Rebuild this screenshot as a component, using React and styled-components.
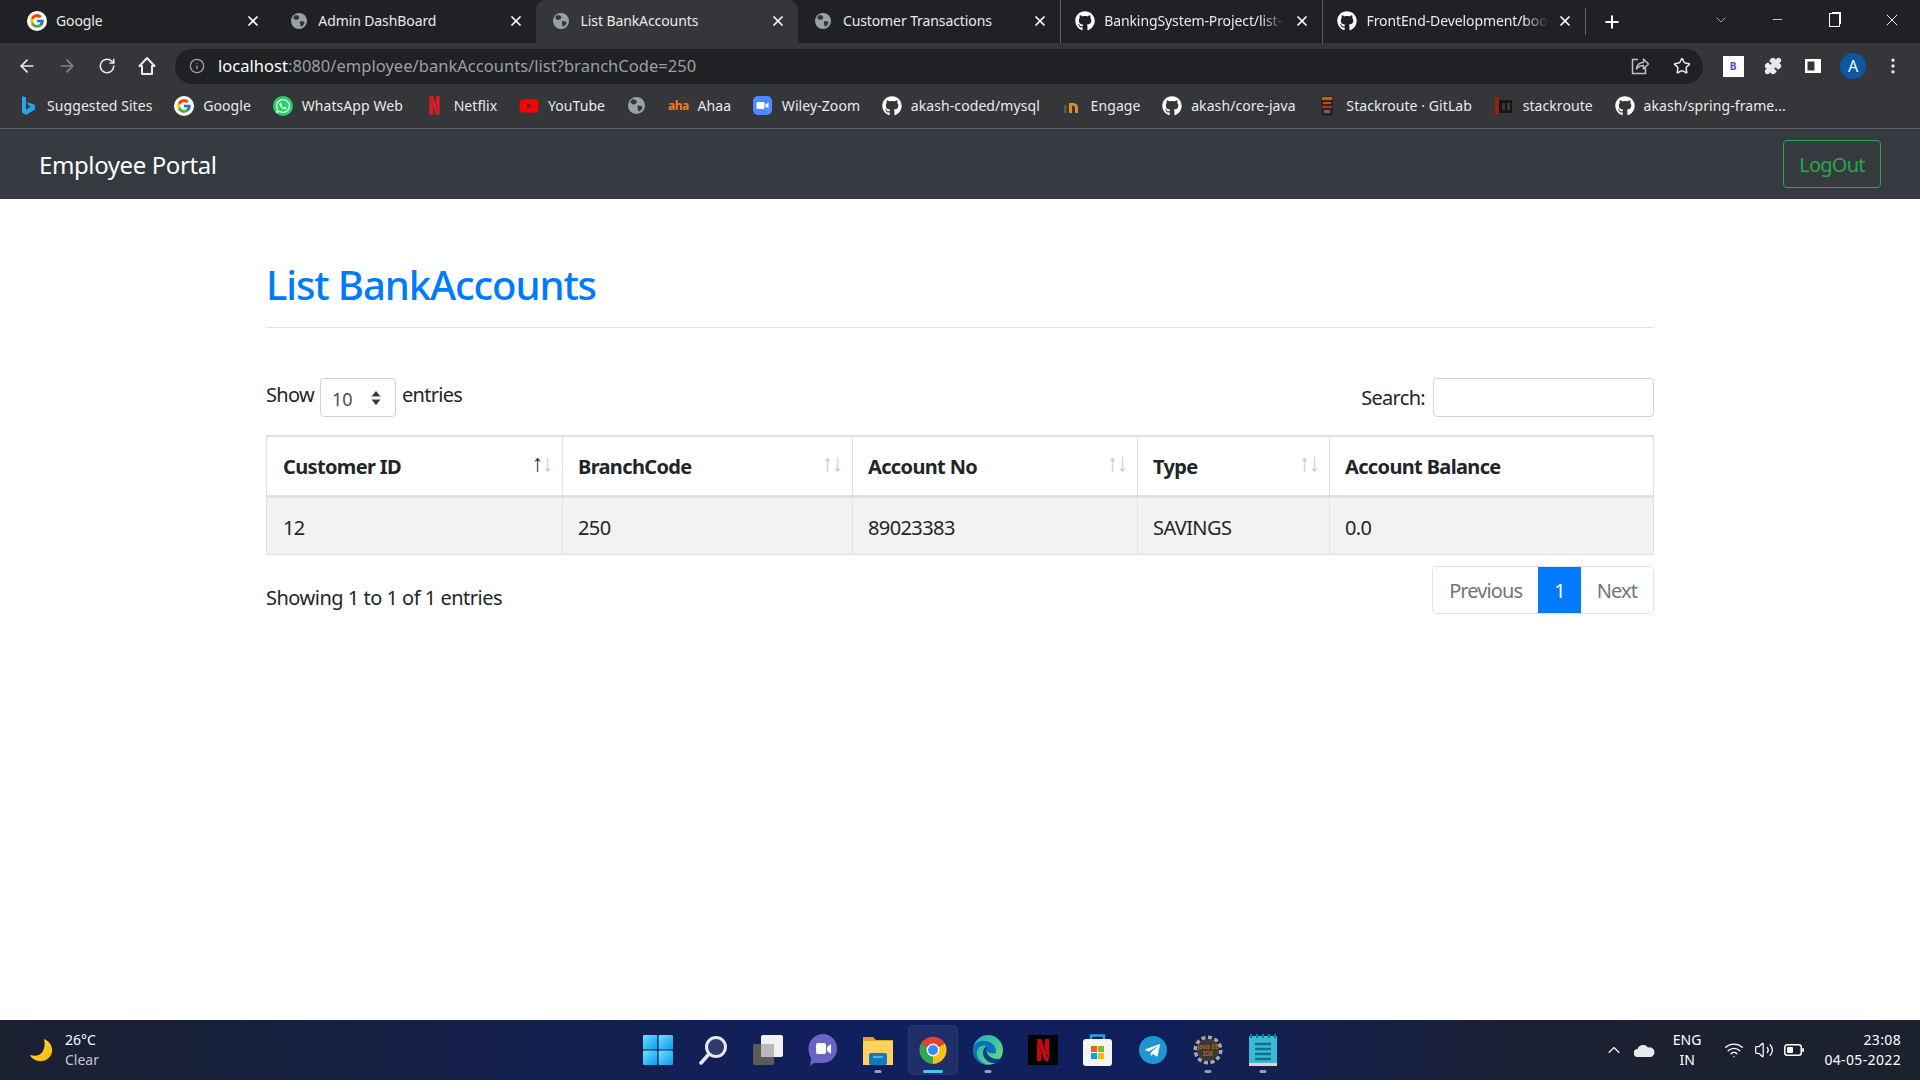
import React from 'react';
import styled, { createGlobalStyle } from 'styled-components';
import {
  ArrowLeft, ArrowRight, RotateCw, Info, Star, Puzzle, MoreVertical, X, Plus,
  ChevronDown, ChevronUp, Minus, Wifi, Volume2,
} from 'lucide-react';
import { FcGoogle } from 'react-icons/fc';
import { FaGithub, FaWhatsapp, FaTelegramPlane, FaYoutube } from 'react-icons/fa';
import { SiNetflix } from 'react-icons/si';

const GlobalStyle = createGlobalStyle`
  * { box-sizing: border-box; }
  html, body { margin: 0; height: 100%; }
  body {
    font-family: "Noto Sans", "Open Sans", sans-serif;
    background: #fff;
    color: #212529;
  }
`;

/* ---- chrome ---- */

const Screen = styled.div`
  display: flex;
  flex-direction: column;
  width: 1920px;
  height: 1080px;
  overflow: hidden;
`;

const TabStrip = styled.div`
  display: flex;
  height: 43px;
  padding-left: 11px;
  background: #202124;
`;

const Tab = styled.div`
  display: flex;
  align-items: center;
  flex: none;
  width: 262.3px;
  padding: 0 12px 2px ${(p) => (p.$divider ? '13px' : '14px')};
  color: #e8eaed;
  font-size: 14px;
  background: ${(p) => (p.$active ? '#35363a' : 'transparent')};
  border-radius: ${(p) => (p.$active ? '10px 10px 0 0' : '0')};
  border-left: 1px solid ${(p) => (p.$divider ? '#5f6368' : 'transparent')};
`;

const Favicon = styled.span`
  display: flex;
  justify-content: center;
  width: 21px;
  margin-right: 9px;
`;

const TabTitle = styled.span`
  flex: 1;
  min-width: 0;
  overflow: hidden;
  white-space: nowrap;
  letter-spacing: -0.1px;
  margin-right: 8px;
  ${(p) => p.$fade && 'mask-image: linear-gradient(to right, #000 86%, transparent);'}
`;

const NewTab = styled.div`
  display: flex;
  align-items: center;
  justify-content: center;
  width: 54px;
  border-left: 1px solid #5f6368;
  margin: 8px 0;
`;

const WindowControls = styled.div`
  display: flex;
  margin-left: auto;
`;

const WindowButton = styled.div`
  display: flex;
  align-items: center;
  justify-content: center;
  width: 57px;
  padding-bottom: 4px;
`;

const MaxGlyph = styled.span`
  width: 11px;
  height: 14px;
  border: 1.2px solid #fff;
  box-shadow: 2px -2px 0 -1px #fff;
`;

const Toolbar = styled.div`
  display: flex;
  align-items: center;
  height: 41px;
  padding: 5px 7px 0;
  background: #35363a;
`;

const ToolButton = styled.div`
  display: flex;
  align-items: center;
  justify-content: center;
  flex: none;
  width: 40px;
`;

const Omnibox = styled.div`
  display: flex;
  align-items: center;
  flex: 1;
  height: 35px;
  margin: 0 10px 0 8px;
  padding-left: 14px;
  border-radius: 18px;
  background: #202124;
`;

const Url = styled.div`
  flex: 1;
  margin-left: 13px;
  padding-bottom: 2px;
  font-size: 16.5px;
  letter-spacing: 0.03px;
  color: #9aa0a6;
  b { color: #fff; font-weight: 400; }
`;

const OmniAction = styled.div`
  display: flex;
  justify-content: center;
  width: 42px;
`;

const ExtensionB = styled.span`
  display: flex;
  align-items: center;
  justify-content: center;
  width: 21px;
  height: 21px;
  background: #fff;
  color: #4b4bd6;
  font-size: 10px;
  font-weight: 700;
`;

const Avatar = styled.span`
  display: flex;
  align-items: center;
  justify-content: center;
  width: 26px;
  height: 26px;
  border-radius: 50%;
  background: #0b57a4;
  color: #fff;
  font-size: 16px;
`;

const BookmarkBar = styled.div`
  display: flex;
  align-items: center;
  gap: 21.7px;
  height: 45px;
  padding: 0 0 1px 18px;
  background: #35363a;
  border-bottom: 1px solid #5f6368;
`;

const Bookmark = styled.div`
  display: flex;
  align-items: center;
  gap: 9px;
`;

const BookmarkIcon = styled.span`
  display: flex;
  align-items: center;
  justify-content: center;
  width: 20px;
  height: 20px;
`;

const BookmarkLabel = styled.span`
  color: #e8eaed;
  font-size: 14px;
  letter-spacing: 0.08px;
  white-space: nowrap;
`;

const WhiteDisc = styled.span`
  display: flex;
  align-items: center;
  justify-content: center;
  width: 20px;
  height: 20px;
  border-radius: 50%;
  background: #fff;
`;

const WhatsDisc = styled.span`
  display: flex;
  align-items: center;
  justify-content: center;
  width: 20px;
  height: 20px;
  border-radius: 50%;
  background: #25d366;
`;

const AhaMark = styled.span`
  color: #f47c20;
  font-size: 12px;
  font-weight: 700;
  letter-spacing: -0.5px;
`;

/* ---- employee portal ---- */

const Navbar = styled.div`
  display: flex;
  align-items: center;
  justify-content: space-between;
  flex: none;
  height: 70px;
  padding: 0 39px 0 39px;
  background: #343a40;
`;

const Brand = styled.div`
  color: #fff;
  font-size: 24px;
  letter-spacing: -0.4px;
`;

const LogoutButton = styled.button`
  width: 98px;
  height: 48px;
  background: transparent;
  border: 1px solid #28a745;
  border-radius: 4px;
  color: #28a745;
  font: inherit;
  font-size: 20px;
  letter-spacing: -0.8px;
`;

const Main = styled.main`
  flex: 1;
  padding-top: 56px;
`;

const Container = styled.div`
  width: 1388px;
  margin: 0 auto;
`;

const Heading = styled.h1`
  margin: 0;
  font-size: 40px;
  font-weight: 500;
  line-height: 60px;
  letter-spacing: -1.1px;
  color: #007bff;
`;

const Rule = styled.hr`
  margin: 12px 0 50px;
  border: 0;
  border-top: 1px solid #e3e3e3;
`;

const Controls = styled.div`
  display: flex;
  align-items: center;
  justify-content: space-between;
  height: 39px;
  margin-bottom: 18px;
  font-size: 20px;
  letter-spacing: -0.7px;
`;

const LengthLabel = styled.label`
  display: flex;
  align-items: flex-start;
  gap: 6px;
  line-height: 34px;
`;

const SelectWrap = styled.span`
  position: relative;
  display: flex;
`;

const LengthSelect = styled.select`
  appearance: none;
  width: 76px;
  height: 39px;
  padding: 3px 0 0 11px;
  background: #fff;
  border: 1px solid #ced4da;
  border-radius: 4px;
  color: #495057;
  font: inherit;
  font-size: 18px;
  line-height: normal;
`;

const SelectArrows = styled.span`
  position: absolute;
  top: 13px;
  right: 15px;
  display: flex;
  pointer-events: none;
`;

const SearchLabel = styled.label`
  display: flex;
  align-items: center;
  gap: 8px;
`;

const SearchInput = styled.input`
  width: 221px;
  height: 39px;
  background: #fff;
  border: 1px solid #ced4da;
  border-radius: 4px;
`;

const Table = styled.table`
  width: 100%;
  table-layout: fixed;
  border-collapse: separate;
  border-spacing: 0;
  font-size: 20px;
`;

const Th = styled.th`
  position: relative;
  width: ${(p) => p.$width}px;
  height: 63px;
  padding: 0 16px 0 15px;
  text-align: left;
  font-weight: 700;
  letter-spacing: -0.65px;
  border-top: 2px solid #dee2e6;
  border-bottom: 3px solid #dee2e6;
  border-right: 1px solid #dee2e6;
  &:first-child { border-left: 1px solid #dee2e6; padding-left: 16px; }
`;

const SortUp = styled.span`
  position: absolute;
  top: 12px;
  right: 19px;
  font-family: "Liberation Sans", sans-serif;
  font-size: 24px;
  font-weight: 400;
  color: ${(p) => (p.$on ? '#212529' : '#c8cacc')};
`;

const SortDown = styled.span`
  position: absolute;
  top: 12px;
  right: 9px;
  font-family: "Liberation Sans", sans-serif;
  font-size: 24px;
  font-weight: 400;
  color: #c8cacc;
`;

const Td = styled.td`
  height: 57px;
  padding: 2px 16px 0 15px;
  letter-spacing: -0.6px;
  background: #f2f2f2;
  border-bottom: 1px solid #dee2e6;
  border-right: 1px solid #dee2e6;
  &:first-child { border-left: 1px solid #dee2e6; padding-left: 16px; }
`;

const Footer = styled.div`
  display: flex;
  justify-content: space-between;
  align-items: flex-start;
  margin-top: 11px;
`;

const Summary = styled.div`
  padding-top: 17.5px;
  font-size: 20px;
  letter-spacing: -0.5px;
`;

const Pagination = styled.div`
  display: flex;
  height: 48px;
  border: 1px solid #dee2e6;
  border-radius: 5px;
  overflow: hidden;
  font-size: 20px;
  letter-spacing: -0.9px;
`;

const PageLink = styled.a`
  display: flex;
  align-items: center;
  padding: 0 16px;
  color: ${(p) => (p.$active ? '#fff' : '#6c757d')};
  background: ${(p) => (p.$active ? '#007bff' : '#fff')};
`;

/* ---- windows taskbar ---- */

const Taskbar = styled.footer`
  display: grid;
  grid-template-columns: 1fr auto 1fr;
  align-items: center;
  flex: none;
  height: 60px;
  background: linear-gradient(90deg, #1b2130 0%, #142049 25%, #10205f 45%, #101f5a 60%, #1b2133 80%, #1c212e 100%);
  color: #fff;
`;

const Weather = styled.div`
  display: flex;
  align-items: center;
  gap: 12px;
  padding-left: 29px;
`;

const WeatherText = styled.div`
  display: flex;
  flex-direction: column;
  font-size: 14px;
  line-height: 20px;
`;

const WeatherDim = styled.span`
  color: #c4c7cf;
`;

const Dock = styled.div`
  display: flex;
  gap: 5px;
  padding: 0 2.5px;
`;

const DockTile = styled.div`
  position: relative;
  display: flex;
  align-items: center;
  justify-content: center;
  width: 50px;
  height: 50px;
  border-radius: 5px;
  ${(p) => p.$focused && 'background: rgba(255,255,255,0.07); box-shadow: inset 0 0 0 1px rgba(255,255,255,0.05);'}
`;

const RunDot = styled.span`
  position: absolute;
  bottom: 2px;
  left: 50%;
  width: ${(p) => (p.$focused ? '20px' : '7px')};
  height: 3px;
  border-radius: 2px;
  transform: translateX(-50%);
  background: ${(p) => (p.$focused ? '#4cc2ff' : '#9a9eae')};
`;

const NetflixTile = styled.span`
  display: flex;
  align-items: center;
  justify-content: center;
  width: 30px;
  height: 30px;
  background: #000;
`;

const TelegramDisc = styled.span`
  display: flex;
  align-items: center;
  justify-content: center;
  width: 28px;
  height: 28px;
  border-radius: 50%;
  background: #1f96d3;
`;

const Tray = styled.div`
  display: flex;
  align-items: center;
  justify-content: flex-end;
  padding-right: 19px;
  font-size: 14px;
`;

const TrayChevron = styled(ChevronUp)`
  margin-right: 10px;
`;

const Lang = styled.div`
  margin: 0 23px 0 18px;
  text-align: center;
  line-height: 20px;
`;

const TrayIcons = styled.div`
  display: flex;
  align-items: center;
  gap: 10px;
  margin-right: 20px;
`;

const Clock = styled.div`
  text-align: right;
  line-height: 20px;
  letter-spacing: 0.35px;
`;

/* ---- little drawings ---- */

const Globe = ({ size = 16 }) => (
  <svg width={size} height={size} viewBox="0 0 16 16">
    <circle cx="8" cy="8" r="8" fill="#9aa0a6" />
    <path d="M4 2l3 .5 1.500 2-1.500 2-2.500.5L2 5zM9 8l4 .5.5 2-2.500 3-1.500-.5-.5-2.500z" fill="#35363a" />
  </svg>
);

const GoogleBadge = () => (
  <WhiteDisc>
    <FcGoogle size={16} />
  </WhiteDisc>
);

const WhatsBadge = () => (
  <WhatsDisc>
    <FaWhatsapp size={16} color="#fff" />
  </WhatsDisc>
);

const HomeGlyph = () => (
  <svg width="18" height="20" viewBox="0 0 18 20" fill="none" stroke="#e8eaed" strokeWidth="2">
    <path d="M9 2L1.500 10H4v8h10v-8h2.500z" strokeLinejoin="round" />
  </svg>
);

const ShareGlyph = () => (
  <svg width="20" height="20" viewBox="0 0 20 20" fill="none" stroke="#bdc1c6" strokeWidth="1.500">
    <path d="M8 3.500H2.500v14h13V12" />
    <path d="M6.500 13c.5-4 3-6.500 7-6.500V3l5 5-5 5V9.500c-3 0-5 1-7 3.500z" strokeLinejoin="round" />
  </svg>
);

const BingMark = () => (
  <svg width="14" height="20" viewBox="0 0 14 20">
    <path d="M1 0l4 1.500v12l5-3-2.500-1L6 6l8 3v4.500L5 19l-4-2.500z" fill="#2aa4e8" />
  </svg>
);

const ZoomMark = () => (
  <svg width="19" height="19" viewBox="0 0 19 19">
    <rect width="19" height="19" rx="5" fill="#4a8cff" />
    <rect x="3.500" y="6" width="8" height="7" rx="1.500" fill="#fff" />
    <path d="M12.500 8.500l3-2v6l-3-2z" fill="#fff" />
  </svg>
);

const EngageMark = () => (
  <svg width="18" height="14" viewBox="0 0 18 14">
    <rect x="1" y="6" width="2.500" height="8" fill="#5a5a50" />
    <path d="M6 14V4h3c4 0 6 2 6 5v5h-3V9c0-1.500-1-2.500-3-2.500V14z" fill="#e08a25" />
  </svg>
);

const StackMark = () => (
  <svg width="12" height="20" viewBox="0 0 12 20">
    <rect width="12" height="20" fill="#2a2422" />
    <rect x="1" y="1" width="10" height="3" fill="#d2561f" />
    <rect x="2" y="6" width="8" height="2" fill="#c4491c" />
    <rect x="1" y="10" width="10" height="2" fill="#a33a18" />
    <rect x="3" y="14" width="6" height="3" fill="#666" />
  </svg>
);

const StackRouteMark = () => (
  <svg width="20" height="20" viewBox="0 0 20 20">
    <rect x="1" y="1" width="4" height="18" fill="#8c2415" />
    <rect x="5" y="4" width="13" height="13" fill="#191716" />
    <rect x="8" y="7" width="3" height="7" fill="#3a3a3a" />
    <rect x="13" y="7" width="3" height="7" fill="#3a3a3a" />
  </svg>
);

const SidePanel = () => (
  <svg width="16" height="16" viewBox="0 0 16 16">
    <path d="M0 1h16v14H0z" fill="#fff" />
    <path d="M2.500 3.500h7v9h-7z" fill="#35363a" />
  </svg>
);

const WindowsLogo = () => (
  <svg width="30" height="30" viewBox="0 0 30 30">
    <defs>
      <linearGradient id="winTile" x1="0" y1="0" x2="1" y2="1">
        <stop offset="0" stopColor="#6fe3ff" />
        <stop offset="1" stopColor="#0a97ee" />
      </linearGradient>
    </defs>
    <rect x="0" y="0" width="14.400" height="14.400" rx="1" fill="url(#winTile)" />
    <rect x="15.600" y="0" width="14.400" height="14.400" rx="1" fill="url(#winTile)" />
    <rect x="0" y="15.600" width="14.400" height="14.400" rx="1" fill="url(#winTile)" />
    <rect x="15.600" y="15.600" width="14.400" height="14.400" rx="1" fill="url(#winTile)" />
  </svg>
);

const SearchGlass = () => (
  <svg width="30" height="30" viewBox="0 0 30 30">
    <circle cx="18" cy="12" r="9.500" fill="#2c3a70" stroke="#e6e8ef" strokeWidth="3" />
    <path d="M11 19l-8 9" stroke="#e6e8ef" strokeWidth="3.500" strokeLinecap="round" />
  </svg>
);

const TaskView = () => (
  <svg width="30" height="30" viewBox="0 0 30 30">
    <rect x="0" y="9" width="21" height="21" rx="2" fill="#5b5b5b" />
    <rect x="8" y="0" width="22" height="22" rx="2" fill="#f2f2f2" />
    <rect x="8" y="9" width="13" height="13" fill="#b9b9b9" />
  </svg>
);

const TeamsChat = () => (
  <svg width="30" height="32" viewBox="0 0 30 32">
    <path d="M15 0c8 0 14 6.500 14 14.500S23 29 15 29H6l-4 3 1-8C1 21 .5 18 .5 14.500.5 6.500 7 0 15 0z" fill="#6a63c8" />
    <rect x="8" y="9" width="10" height="11" rx="2" fill="#fff" />
    <path d="M19 13l4-3v10l-4-3z" fill="#fff" />
  </svg>
);

const FolderIcon = () => (
  <svg width="30" height="30" viewBox="0 0 30 30">
    <path d="M0 2h10l3 3h17v25H0z" fill="#e2a81d" />
    <rect y="6" width="30" height="24" fill="#fdd25e" />
    <rect x="6" y="18" width="18" height="12" rx="2" fill="#1178c4" />
    <rect x="10" y="21" width="10" height="2" fill="#4fb3ea" />
  </svg>
);

const ChromeIcon = () => (
  <svg width="28" height="28" viewBox="0 0 28 28">
    <path d="M14 14L2 7.500A14 14 0 0 1 26 7.500z" fill="#e34133" />
    <path d="M14 14L26 7.500A14 14 0 0 1 14 28z" fill="#fbc116" />
    <path d="M14 14V28A14 14 0 0 1 2 7.500z" fill="#33a853" />
    <circle cx="14" cy="14" r="6.500" fill="#fff" />
    <circle cx="14" cy="14" r="5" fill="#4285f4" />
  </svg>
);

const EdgeIcon = () => (
  <svg width="30" height="30" viewBox="0 0 30 30">
    <defs>
      <linearGradient id="edgeGreen" x1="0" y1="0" x2="1" y2="1">
        <stop offset="0" stopColor="#1fa9c9" />
        <stop offset="1" stopColor="#6be26a" />
      </linearGradient>
    </defs>
    <circle cx="15" cy="15" r="15" fill="url(#edgeGreen)" />
    <path d="M0 15c1-7 7-10 13-9 6 1 11 6 10 12-4 1-9 0-10-3-1-2 0-3 1-4C8 9 3 13 4 20c1 5 6 10 14 9.500C9 32 0 25 0 15z" fill="#0c6ebd" />
    <path d="M14 11c-4 2-5 7-3 11 2 4 7 7 12 6 3-1 5-3 6-5-4 2-10 1-13-2-3-3-3-7-2-10z" fill="#0b3f86" />
  </svg>
);

const StoreBag = () => (
  <svg width="29" height="32" viewBox="0 0 29 32">
    <path d="M8 6V1.500h13V6" fill="none" stroke="#2aa0e6" strokeWidth="2.500" />
    <rect y="5" width="29" height="27" rx="3" fill="#f4f4f4" />
    <rect x="8" y="12" width="6" height="6" fill="#f05b2a" />
    <rect x="15" y="12" width="6" height="6" fill="#7dbb1f" />
    <rect x="8" y="19" width="6" height="6" fill="#00a4ef" />
    <rect x="15" y="19" width="6" height="6" fill="#ffb900" />
  </svg>
);

const GearIcon = () => (
  <svg width="30" height="30" viewBox="0 0 30 30">
    <circle cx="15" cy="15" r="12.500" fill="none" stroke="#a8a8a8" strokeWidth="4" strokeDasharray="4 2.500" />
    <circle cx="15" cy="15" r="11" fill="#3a3836" />
    <text x="15" y="13.500" textAnchor="middle" fontSize="6.500" fontFamily="Noto Sans, sans-serif" fill="#d8781c">Java EE</text>
    <text x="15" y="21" textAnchor="middle" fontSize="6.500" fontFamily="Noto Sans, sans-serif" fill="#d8781c">IDE</text>
  </svg>
);

const NotepadIcon = () => (
  <svg width="28" height="32" viewBox="0 0 28 32">
    <rect y="2" width="28" height="30" rx="1" fill="#3bb9d8" />
    <rect y="29" width="28" height="3" fill="#e8d5b0" />
    <path d="M2 0v4M8 0v4M14 0v4M20 0v4M26 0v4" stroke="#1a7d96" strokeWidth="2" />
    <path d="M6 10h16M6 15h16M6 20h16M6 25h16" stroke="#10708c" strokeWidth="2.500" />
  </svg>
);

const MoonIcon = () => (
  <svg width="24" height="24" viewBox="0 0 24 24">
    <defs>
      <linearGradient id="moonFill" x1="0" y1="0" x2="1" y2="1">
        <stop offset="0" stopColor="#ffe14a" />
        <stop offset="1" stopColor="#fbb400" />
      </linearGradient>
    </defs>
    <path d="M15 1c6 2 9 8 8 13-1 6-7 10-13 9-4-.5-8-3-9-6 6 2 11 0 13-4 2-4 2-8 1-12z" fill="url(#moonFill)" />
  </svg>
);

const CloudIcon = () => (
  <svg width="21" height="14" viewBox="0 0 21 14">
    <path d="M4 14a4 4 0 0 1-.5-8A6 6 0 0 1 14 4.500 4.500 4.500 0 0 1 17 14z" fill="#e8e9ec" />
  </svg>
);

const BatteryIcon = () => (
  <svg width="20" height="14" viewBox="0 0 20 14">
    <rect x=".75" y="1.750" width="16.500" height="10.500" rx="2.500" fill="none" stroke="#fff" strokeWidth="1.500" />
    <rect x="3" y="4" width="6" height="6" rx="1" fill="#fff" />
    <rect x="18.200" y="5" width="1.800" height="4" rx=".8" fill="#fff" />
  </svg>
);

/* ---- data ---- */

const tabs = [
  { title: 'Google', icon: <GoogleBadge /> },
  { title: 'Admin DashBoard', icon: <Globe /> },
  { title: 'List BankAccounts', icon: <Globe />, active: true },
  { title: 'Customer Transactions', icon: <Globe /> },
  { title: 'BankingSystem-Project/list-', icon: <FaGithub size={20} color="#fff" />, fade: true, divider: true },
  { title: 'FrontEnd-Development/boot', icon: <FaGithub size={20} color="#fff" />, fade: true, divider: true },
];

const bookmarks = [
  { label: 'Suggested Sites', icon: <BingMark /> },
  { label: 'Google', icon: <GoogleBadge /> },
  { label: 'WhatsApp Web', icon: <WhatsBadge /> },
  { label: 'Netflix', icon: <SiNetflix size={19} color="#d81f26" /> },
  { label: 'YouTube', icon: <FaYoutube size={20} color="#f00" /> },
  { icon: <Globe size={17} /> },
  { label: 'Ahaa', icon: <AhaMark>aha</AhaMark> },
  { label: 'Wiley-Zoom', icon: <ZoomMark /> },
  { label: 'akash-coded/mysql', icon: <FaGithub size={20} color="#fff" /> },
  { label: 'Engage', icon: <EngageMark /> },
  { label: 'akash/core-java', icon: <FaGithub size={20} color="#fff" /> },
  { label: 'Stackroute · GitLab', icon: <StackMark /> },
  { label: 'stackroute', icon: <StackRouteMark /> },
  { label: 'akash/spring-frame...', icon: <FaGithub size={20} color="#fff" /> },
];

const columns = [
  { title: 'Customer ID', width: 297, sort: 'asc' },
  { title: 'BranchCode', width: 290, sort: 'none' },
  { title: 'Account No', width: 285, sort: 'none' },
  { title: 'Type', width: 192, sort: 'none' },
  { title: 'Account Balance', width: 324 },
];

const rows = [['12', '250', '89023383', 'SAVINGS', '0.0']];

const dockApps = [
  { icon: <WindowsLogo /> },
  { icon: <SearchGlass /> },
  { icon: <TaskView /> },
  { icon: <TeamsChat /> },
  { icon: <FolderIcon />, running: true },
  { icon: <ChromeIcon />, running: true, focused: true },
  { icon: <EdgeIcon />, running: true },
  { icon: <NetflixTile><SiNetflix size={22} color="#c8070f" /></NetflixTile> },
  { icon: <StoreBag /> },
  { icon: <TelegramDisc><FaTelegramPlane size={17} color="#fff" /></TelegramDisc> },
  { icon: <GearIcon />, running: true },
  { icon: <NotepadIcon />, running: true },
];

/* ---- page ---- */

export default function App() {
  return (
    <>
      <GlobalStyle />
      <Screen>
        <TabStrip>
          {tabs.map((tab) => (
            <Tab key={tab.title} $active={tab.active} $divider={tab.divider}>
              <Favicon>{tab.icon}</Favicon>
              <TabTitle $fade={tab.fade}>{tab.title}</TabTitle>
              <X size={16} strokeWidth={2.6} color="#fff" />
            </Tab>
          ))}
          <NewTab>
            <Plus size={20} strokeWidth={2.4} color="#fff" />
          </NewTab>
          <WindowControls>
            <WindowButton><ChevronDown size={16} strokeWidth={1.2} color="#bdc1c6" /></WindowButton>
            <WindowButton><Minus size={15} strokeWidth={1.2} color="#fff" /></WindowButton>
            <WindowButton><MaxGlyph /></WindowButton>
            <WindowButton><X size={20} strokeWidth={1.1} color="#fff" /></WindowButton>
          </WindowControls>
        </TabStrip>

        <Toolbar>
          <ToolButton><ArrowLeft size={20} color="#e8eaed" /></ToolButton>
          <ToolButton><ArrowRight size={20} color="#80868b" /></ToolButton>
          <ToolButton><RotateCw size={18} color="#e8eaed" /></ToolButton>
          <ToolButton><HomeGlyph /></ToolButton>
          <Omnibox>
            <Info size={16} color="#9aa0a6" />
            <Url><b>localhost</b>:8080/employee/bankAccounts/list?branchCode=250</Url>
            <OmniAction><ShareGlyph /></OmniAction>
            <OmniAction><Star size={18} color="#e8eaed" /></OmniAction>
          </Omnibox>
          <ToolButton><ExtensionB>B</ExtensionB></ToolButton>
          <ToolButton><Puzzle size={18} color="#e8eaed" fill="#e8eaed" /></ToolButton>
          <ToolButton><SidePanel /></ToolButton>
          <ToolButton><Avatar>A</Avatar></ToolButton>
          <ToolButton><MoreVertical size={20} color="#e8eaed" /></ToolButton>
        </Toolbar>

        <BookmarkBar>
          {bookmarks.map((mark, i) => (
            <Bookmark key={i}>
              <BookmarkIcon>{mark.icon}</BookmarkIcon>
              {mark.label && <BookmarkLabel>{mark.label}</BookmarkLabel>}
            </Bookmark>
          ))}
        </BookmarkBar>

        <Navbar>
          <Brand>Employee Portal</Brand>
          <LogoutButton>LogOut</LogoutButton>
        </Navbar>

        <Main>
          <Container>
            <Heading>List BankAccounts</Heading>
            <Rule />
            <Controls>
              <LengthLabel>
                Show
                <SelectWrap>
                  <LengthSelect defaultValue="10">
                    <option>10</option>
                    <option>25</option>
                    <option>50</option>
                  </LengthSelect>
                  <SelectArrows>
                    <svg width="10" height="14" viewBox="0 0 10 14">
                      <path d="M5 0l4.500 5.500h-9zM5 14L.5 8.500h9z" fill="#343a40" />
                    </svg>
                  </SelectArrows>
                </SelectWrap>
                entries
              </LengthLabel>
              <SearchLabel>
                Search:
                <SearchInput type="search" />
              </SearchLabel>
            </Controls>

            <Table>
              <thead>
                <tr>
                  {columns.map((col) => (
                    <Th key={col.title} $width={col.width}>
                      {col.title}
                      {col.sort && (
                        <>
                          <SortUp $on={col.sort === 'asc'}>↑</SortUp>
                          <SortDown>↓</SortDown>
                        </>
                      )}
                    </Th>
                  ))}
                </tr>
              </thead>
              <tbody>
                {rows.map((row) => (
                  <tr key={row[2]}>
                    {row.map((cell, i) => <Td key={i}>{cell}</Td>)}
                  </tr>
                ))}
              </tbody>
            </Table>

            <Footer>
              <Summary>Showing 1 to 1 of 1 entries</Summary>
              <Pagination>
                <PageLink>Previous</PageLink>
                <PageLink $active>1</PageLink>
                <PageLink>Next</PageLink>
              </Pagination>
            </Footer>
          </Container>
        </Main>

        <Taskbar>
          <Weather>
            <MoonIcon />
            <WeatherText>
              <span>26°C</span>
              <WeatherDim>Clear</WeatherDim>
            </WeatherText>
          </Weather>
          <Dock>
            {dockApps.map((app, i) => (
              <DockTile key={i} $focused={app.focused}>
                {app.icon}
                {app.running && <RunDot $focused={app.focused} />}
              </DockTile>
            ))}
          </Dock>
          <Tray>
            <TrayChevron size={20} strokeWidth={1.3} color="#fff" />
            <CloudIcon />
            <Lang>ENG<br />IN</Lang>
            <TrayIcons>
              <Wifi size={20} strokeWidth={1.6} color="#fff" />
              <Volume2 size={20} strokeWidth={1.5} color="#fff" />
              <BatteryIcon />
            </TrayIcons>
            <Clock>23:08<br />04-05-2022</Clock>
          </Tray>
        </Taskbar>
      </Screen>
    </>
  );
}
